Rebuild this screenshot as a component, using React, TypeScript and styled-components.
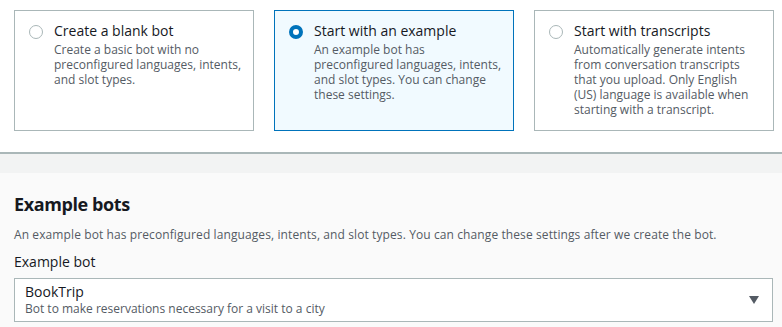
import React from 'react';
import styled, { createGlobalStyle } from 'styled-components';

const GlobalStyle = createGlobalStyle`
  body {
    margin: 0;
    background: #fafafa;
    font-family: 'Open Sans', 'Liberation Sans', Arial, sans-serif;
    color: #16191f;
  }
`;

const TopSection = styled.section`
  background: #ffffff;
  padding: 10px 8px 21px 14px;
`;

const CardGrid = styled.div`
  display: grid;
  grid-template-columns: repeat(3, 240px);
  gap: 20px;
`;

const Card = styled.label<{ selected?: boolean }>`
  display: flex;
  align-items: flex-start;
  gap: 11px;
  box-sizing: border-box;
  height: 121px;
  padding: 10px 12px 0 14px;
  border: 1px solid ${({ selected }) => (selected ? '#0073bb' : '#aab7b8')};
  background: ${({ selected }) => (selected ? '#f1faff' : '#ffffff')};
  cursor: pointer;
`;

const Radio = styled.span<{ checked?: boolean }>`
  flex: none;
  box-sizing: border-box;
  width: 14px;
  height: 14px;
  margin-top: 4px;
  border-radius: 50%;
  background: #ffffff;
  border: ${({ checked }) => (checked ? '4px solid #0073bb' : '1px solid #aab7b8')};
`;

const CardText = styled.div`
  display: flex;
  flex-direction: column;
`;

const CardTitle = styled.span`
  font-size: 14px;
  line-height: 20px;
  color: #16191f;
`;

const CardDescription = styled.span`
  margin-top: 1px;
  font-size: 12px;
  line-height: 15px;
  color: #545b64;
`;

const Band = styled.div`
  height: 19px;
  border-top: 2px solid #aab7b8;
  background: #f2f3f3;
`;

const ExampleSection = styled.section`
  padding: 20px 9px 6px 14px;
`;

const Heading = styled.h2`
  margin: 0;
  font-size: 18px;
  line-height: 22px;
  font-weight: 700;
  letter-spacing: -0.4px;
  color: #16191f;
`;

const Description = styled.p`
  margin: 12px 0 0;
  font-size: 12px;
  line-height: 16px;
  letter-spacing: 0.1px;
  color: #545b64;
`;

const FieldLabel = styled.div`
  margin-top: 9px;
  font-size: 14px;
  line-height: 20px;
  color: #16191f;
`;

const Select = styled.div`
  display: flex;
  align-items: center;
  justify-content: space-between;
  margin-top: 6px;
  padding: 4px 13px 4px 10px;
  border: 1px solid #aab7b8;
  background: #ffffff;
`;

const SelectValue = styled.div`
  display: flex;
  flex-direction: column;
`;

const ValueTitle = styled.span`
  font-size: 14px;
  line-height: 18px;
  color: #16191f;
`;

const ValueDescription = styled.span`
  font-size: 12px;
  line-height: 16px;
  color: #545b64;
`;

const Caret = styled.span`
  width: 0;
  height: 0;
  border-left: 5px solid transparent;
  border-right: 5px solid transparent;
  border-top: 8px solid #545b64;
`;

const options = [
  {
    title: 'Create a blank bot',
    description: 'Create a basic bot with no preconfigured languages, intents, and slot types.',
  },
  {
    title: 'Start with an example',
    description:
      'An example bot has preconfigured languages, intents, and slot types. You can change these settings.',
  },
  {
    title: 'Start with transcripts',
    description:
      'Automatically generate intents from conversation transcripts that you upload. Only English (US) language is available when starting with a transcript.',
  },
];

const App: React.FC = () => {
  const [selected, setSelected] = React.useState(1);

  return (
    <>
      <GlobalStyle />
      <TopSection>
        <CardGrid>
          {options.map((option, i) => (
            <Card key={option.title} selected={selected === i} onClick={() => setSelected(i)}>
              <Radio checked={selected === i} />
              <CardText>
                <CardTitle>{option.title}</CardTitle>
                <CardDescription>{option.description}</CardDescription>
              </CardText>
            </Card>
          ))}
        </CardGrid>
      </TopSection>
      <Band />
      <ExampleSection>
        <Heading>Example bots</Heading>
        <Description>
          An example bot has preconfigured languages, intents, and slot types. You can change these
          settings after we create the bot.
        </Description>
        <FieldLabel>Example bot</FieldLabel>
        <Select>
          <SelectValue>
            <ValueTitle>BookTrip</ValueTitle>
            <ValueDescription>Bot to make reservations necessary for a visit to a city</ValueDescription>
          </SelectValue>
          <Caret />
        </Select>
      </ExampleSection>
    </>
  );
};

export default App;
